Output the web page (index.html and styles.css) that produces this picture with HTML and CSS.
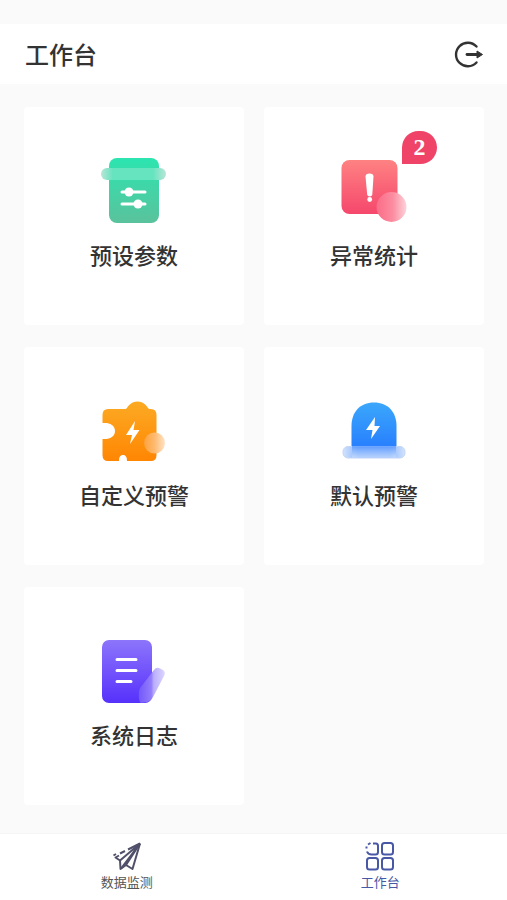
FILE: index.html
```html
<!DOCTYPE html>
<html lang="zh-CN">
<head>
    <meta charset="UTF-8">
    <meta name="viewport" content="width=device-width, initial-scale=1.0">
    <title>工作台</title>
    <link rel="stylesheet" href="styles.css">
</head>
<body>
    <header class="header">
        <h1>工作台</h1>
        <button class="logout-btn" type="button" aria-label="退出">
            <svg class="logout-icon" viewBox="0 0 30 30">
                <path d="M22.5 7.5A11.8 11.8 0 1 0 22.5 23.5" fill="none" stroke="#333" stroke-width="2.4" stroke-linecap="round"/>
                <path d="M13 15.5H24" stroke="#333" stroke-width="2.8" stroke-linecap="round"/>
                <path d="M23 12L28.5 15.5L23 19Z" fill="#333" stroke="#333" stroke-linejoin="round"/>
            </svg>
        </button>
    </header>

    <main class="grid">
        <a class="card" href="#params">
            <svg class="card-icon" viewBox="-1 0 90 90">
                <defs>
                    <linearGradient id="green" x1="0" y1="0" x2="0" y2="1">
                        <stop offset="0" stop-color="#2ce5b0"/>
                        <stop offset="1" stop-color="#5ac29c"/>
                    </linearGradient>
                    <linearGradient id="greenBar" x1="0" y1="0" x2="1" y2="0">
                        <stop offset="0" stop-color="#b9e5d7"/>
                        <stop offset=".18" stop-color="#66e4bf"/>
                        <stop offset=".8" stop-color="#66e4bf"/>
                        <stop offset="1" stop-color="#b9e5d7"/>
                    </linearGradient>
                </defs>
                <rect x="19" y="13" width="50" height="65" rx="8" fill="url(#green)"/>
                <rect x="11" y="23" width="65" height="12" rx="6" fill="url(#greenBar)"/>
                <path d="M32 47H55M32 59H55" stroke="#fff" stroke-width="3" stroke-linecap="round"/>
                <circle cx="39" cy="47" r="4.5" fill="#fff"/>
                <circle cx="48" cy="59" r="4.5" fill="#fff"/>
            </svg>
            <h2>预设参数</h2>
        </a>

        <a class="card" href="#stats">
            <svg class="card-icon" viewBox="-1 0 90 90">
                <defs>
                    <linearGradient id="red" x1="0" y1="0" x2="0" y2="1">
                        <stop offset="0" stop-color="#fe8282"/>
                        <stop offset="1" stop-color="#f5476c"/>
                    </linearGradient>
                    <linearGradient id="redBall" x1="0" y1="0" x2="1" y2="0">
                        <stop offset="0" stop-color="#fb6c87"/>
                        <stop offset=".55" stop-color="#fb8da1"/>
                        <stop offset="1" stop-color="#fdd3da"/>
                    </linearGradient>
                </defs>
                <rect x="11.5" y="15" width="56" height="54" rx="8" fill="url(#red)"/>
                <path d="M35.5 31.5Q35.5 28.5 39.5 28.5Q43.5 28.5 43.5 31.5L42.3 49.5Q42 51.5 39.8 51.5Q37.4 51.5 37.2 49.5Z" fill="#fff"/>
                <circle cx="39.7" cy="54.5" r="2.4" fill="#fff"/>
                <circle cx="61.5" cy="62" r="15" fill="url(#redBall)"/>
            </svg>
            <span class="badge">2</span>
            <h2>异常统计</h2>
        </a>

        <a class="card" href="#custom">
            <svg class="card-icon" viewBox="-1 -5 90 90">
                <defs>
                    <linearGradient id="orange" x1="0" y1="0" x2="0" y2="1">
                        <stop offset="0" stop-color="#fcaa23"/>
                        <stop offset="1" stop-color="#ff8603"/>
                    </linearGradient>
                    <linearGradient id="orangeBall" x1="0" y1="0" x2="1" y2="0">
                        <stop offset="0" stop-color="#ffa23c"/>
                        <stop offset=".5" stop-color="#ffba70"/>
                        <stop offset="1" stop-color="#ffe3c6"/>
                    </linearGradient>
                </defs>
                <path d="M18 19H36C39 15.5 41 11.5 47.5 11.5C54 11.5 56 15.5 59 19H61Q66.500 19 66.500 25V65Q66.500 71 61 71H37C37 67.500 36 65 33 65C30 65 29 67.500 29 71H18Q12.500 71 12.500 65V49H15C20 49 25 46.500 25 41C25 35.500 20 33 15 33H12.500V25Q12.500 19 18 19Z" fill="url(#orange)"/>
                <path d="M45 31L36 45H42L40 54L49.5 40H43.5Z" fill="#fff"/>
                <circle cx="64.5" cy="53" r="10.5" fill="url(#orangeBall)"/>
            </svg>
            <h2>自定义预警</h2>
        </a>

        <a class="card" href="#default">
            <svg class="card-icon" viewBox="-1 -5 90 90">
                <defs>
                    <linearGradient id="blue" x1="0" y1="0" x2="0" y2="1">
                        <stop offset="0" stop-color="#3ba7fb"/>
                        <stop offset="1" stop-color="#277dfe"/>
                    </linearGradient>
                    <linearGradient id="blueBar" x1="0" y1="0" x2="1" y2="0">
                        <stop offset="0" stop-color="#d4e3fc"/>
                        <stop offset=".25" stop-color="#8ab7fe"/>
                        <stop offset=".75" stop-color="#8ab7fe"/>
                        <stop offset="1" stop-color="#d4e3fc"/>
                    </linearGradient>
                    <linearGradient id="blueFade" x1="0" y1="0" x2="0" y2="1">
                        <stop offset="0" stop-color="#488fff" stop-opacity=".7"/>
                        <stop offset="1" stop-color="#d4e3fc" stop-opacity=".6"/>
                    </linearGradient>
                </defs>
                <path d="M21.5 60V36C21.5 22 30 12.5 44 12.5C58 12.5 66.5 22 66.5 36V60Z" fill="url(#blue)"/>
                <path d="M45 27L36 40H42.5L41 49L50 36H44.5Z" fill="#fff"/>
                <rect x="13" y="56.5" width="62" height="11.5" rx="5" fill="url(#blueBar)" stroke="#c3d6f8"/>
                <rect x="22" y="56" width="44" height="11.5" fill="url(#blueFade)"/>
            </svg>
            <h2>默认预警</h2>
        </a>

        <a class="card" href="#log">
            <svg class="card-icon" viewBox="-1 -5 90 90">
                <defs>
                    <linearGradient id="purple" x1="0" y1="0" x2="0" y2="1">
                        <stop offset="0" stop-color="#8d75fb"/>
                        <stop offset="1" stop-color="#5631fb"/>
                    </linearGradient>
                    <linearGradient id="pen" x1="0" y1="0" x2="1" y2="0">
                        <stop offset="0" stop-color="#7358fa"/>
                        <stop offset=".48" stop-color="#937dfb"/>
                        <stop offset=".58" stop-color="#baaefd"/>
                        <stop offset="1" stop-color="#dcd6fe"/>
                    </linearGradient>
                </defs>
                <rect x="12" y="10" width="50" height="63" rx="7" fill="url(#purple)"/>
                <path d="M27 29.5H46M27 40.5H46M27 51.5H41" stroke="#fff" stroke-width="3" stroke-linecap="round"/>
                <path d="M64 40Q66 37 69 38L73 40Q76 42 74 46L63 67Q61 71 57 72L51 73Q48 71 49 62Q49 60 50 58Z" fill="url(#pen)"/>
            </svg>
            <h2>系统日志</h2>
        </a>
    </main>

    <nav class="tabbar">
        <a class="tab" href="#monitor">
            <svg class="tab-icon" viewBox="0 0 32 32" fill="none" stroke="#50506a" stroke-width="2" stroke-linejoin="round">
                <path d="M29 3.5L21.500 29L15 25L9.500 29L9 20.500L4.500 17.500L8 15.500"/>
                <path d="M29 3.5L9 20.5M29 3.5L10 28.5M29 3.5L15 25"/>
                <path d="M29 3.5L17 9.5M14 11L9 13.5M5 14L2.5 15.5"/>
            </svg>
            <span>数据监测</span>
        </a>
        <a class="tab active" href="#workbench">
            <svg class="tab-icon" viewBox="0 0 32 32" fill="none" stroke="#4858a5" stroke-width="2">
                <path d="M9 3.5H12Q14 3.5 14 6V12Q14 14.5 11.5 14.5H7.5Q4 14.5 3 11.5"/>
                <path d="M2.5 8.5V6.5M4 4.500L6.5 3"/>
                <rect x="18" y="3" width="11" height="11.5" rx="2.5"/>
                <rect x="3" y="18" width="11" height="11.5" rx="2.5"/>
                <rect x="18" y="18" width="11" height="11.5" rx="2.5"/>
            </svg>
            <span>工作台</span>
        </a>
    </nav>
</body>
</html>
```
FILE: styles.css
```css
* {
    margin: 0;
    padding: 0;
    box-sizing: border-box;
}

body {
    font-family: "Noto Sans CJK SC", sans-serif;
    background: #fafafa;
    color: #333;
    min-height: 100vh;
    display: flex;
    flex-direction: column;
    padding-top: 24px;
}

a {
    color: inherit;
    text-decoration: none;
}

.header {
    display: flex;
    align-items: center;
    justify-content: space-between;
    padding: 12px 23px 12px 25px;
    background: #fff;
}

.header h1 {
    font-size: 24px;
    font-weight: 500;
    line-height: 36px;
}

.logout-btn {
    display: flex;
    border: none;
    background: none;
    cursor: pointer;
}

.logout-icon {
    width: 30px;
    height: 30px;
}

.grid {
    flex: 1;
    display: grid;
    grid-template-columns: 1fr 1fr;
    align-content: start;
    gap: 22px 20px;
    padding: 23px 23px 23px 24px;
}

.card {
    position: relative;
    display: flex;
    flex-direction: column;
    align-items: center;
    gap: 2px;
    padding: 38px 0 54px;
    background: #fff;
    border-radius: 4px;
}

.card-icon {
    width: 90px;
    height: 90px;
}

.card h2 {
    font-size: 22px;
    font-weight: 500;
    line-height: 34px;
}

.badge {
    position: absolute;
    top: 24px;
    right: 47px;
    width: 35px;
    height: 33px;
    border-radius: 18px 18px 18px 0;
    background: #ef4367;
    color: #fff;
    font-family: "Liberation Serif", serif;
    font-size: 24px;
    font-weight: bold;
    line-height: 33px;
    text-align: center;
}

.tabbar {
    display: flex;
    background: #fff;
    border-top: 1px solid #f5f5f5;
}

.tab {
    flex: 1;
    display: flex;
    flex-direction: column;
    align-items: center;
    padding: 6px 0 8px;
    color: #555;
    font-size: 13px;
    line-height: 20px;
}

.tab.active {
    color: #4858a5;
}

.tab-icon {
    width: 32px;
    height: 32px;
}
```
